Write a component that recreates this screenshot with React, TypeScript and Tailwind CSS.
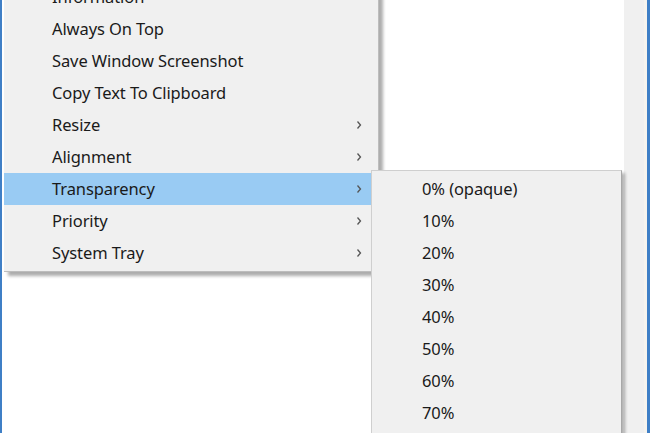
import React from "react";

const mainItems: { label: string; sub?: boolean; active?: boolean }[] = [
  { label: "Information" },
  { label: "Always On Top" },
  { label: "Save Window Screenshot" },
  { label: "Copy Text To Clipboard" },
  { label: "Resize", sub: true },
  { label: "Alignment", sub: true },
  { label: "Transparency", sub: true, active: true },
  { label: "Priority", sub: true },
  { label: "System Tray", sub: true },
];

const subItems = ["0% (opaque)", "10%", "20%", "30%", "40%", "50%", "60%", "70%"];

function Chevron() {
  return (
    <svg width="6" height="10" viewBox="0 0 6 10" className="text-[#555]">
      <path d="M1.5 1.5 L4.5 5 L1.5 8.5" fill="none" stroke="currentColor" strokeWidth="1.3" />
    </svg>
  );
}

export default function App() {
  return (
    <div
      className="relative w-[650px] h-[433px] overflow-hidden bg-white flex text-[#1a1a1a]"
      style={{ fontFamily: '"Noto Sans", "Open Sans", sans-serif' }}
    >
      <div className="w-[2px] h-full bg-[#3f7fc6]" />
      <div className="flex-1 bg-white" />
      <div className="w-[20px] h-full bg-[#f0f0f0]" />
      <div className="w-[3px] h-full bg-[#f6f4ef]" />
      <div className="w-[3px] h-full bg-[#3f7fc6]" />

      {/* main context menu */}
      <div className="absolute left-[4px] top-[-19px] w-[375px] bg-[#f0f0f0] border-r border-b border-[#bdbdbd] pb-[2px] shadow-[4px_4px_3px_rgba(0,0,0,0.32)]">
        {mainItems.map((it) => (
          <div
            key={it.label}
            className={`h-[32px] flex items-center pl-[48px] pr-[16px] text-[16.5px] tracking-[-0.1px] ${
              it.active ? "bg-[#99cbf3]" : ""
            }`}
          >
            <span className="flex-1">{it.label}</span>
            {it.sub && <Chevron />}
          </div>
        ))}
      </div>

      {/* submenu */}
      <div className="absolute left-[371px] top-[170px] w-[251px] h-[300px] bg-[#f0f0f0] border border-[#cfcfcf] border-r-[#a8a8a8] pt-[2px] shadow-[3px_3px_3px_rgba(0,0,0,0.3)]">
        {subItems.map((s) => (
          <div key={s} className="h-[32px] flex items-center pl-[50px] text-[16.5px] tracking-[-0.1px]">
            {s}
          </div>
        ))}
      </div>
    </div>
  );
}
